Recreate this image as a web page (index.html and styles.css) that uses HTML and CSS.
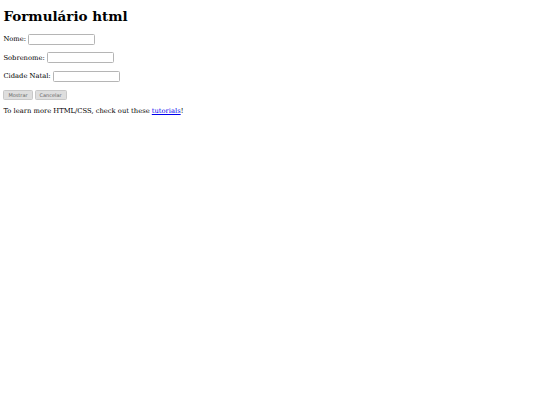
FILE: index.html
```html
<!DOCTYPE html>
<html lang="pt">
<head>
<meta charset="utf-8">
<title>Formulário html</title>
<link rel="stylesheet" href="styles.css">
</head>
<body>
<h1 class="title">Formulário html</h1>
<form class="form">
  <p class="row"><label class="lbl">Nome: <input class="field" type="text"></label></p>
  <p class="row"><label class="lbl">Sobrenome: <input class="field" type="text"></label></p>
  <p class="row"><label class="lbl">Cidade Natal: <input class="field" type="text"></label></p>
  <p class="row actions"><button class="btn" type="button">Mostrar</button><button class="btn" type="reset">Cancelar</button></p>
</form>
<p class="note">To learn more HTML/CSS, check out these <a class="link" href="#">tutorials</a>!</p>
</body>
</html>
```
FILE: styles.css
```css
html { background: #fff; }
body {
  margin: 0 3.4px;
  padding-top: 0.1px;
  font-family: "DejaVu Serif", serif;
  font-size: 6.75px;
  color: #000;
}
.title {
  font-size: 13.5px;
  font-weight: bold;
  margin: 9px 0;
  line-height: 15.7px;
}
.form { margin: 0; }
.row {
  margin: 9px 0 0;
  height: 11px;
  display: flex;
  align-items: center;
}
.row + .row { margin-top: 7.5px; }
.actions { gap: 2px; }
.lbl { display: flex; align-items: center; white-space: pre; }
.field {
  width: 67px;
  height: 11px;
  box-sizing: border-box;
  padding: 0 1px;
  margin: 0;
  border: 1px solid #b5b5b5;
  border-radius: 1.5px;
  font-size: 5.6px;
  background: #fff;
}
.btn {
  font-family: "DejaVu Sans", sans-serif;
  font-size: 5px;
  color: #666;
  background: #dedede;
  border: 1px solid #c8c8c8;
  border-radius: 1.5px;
  padding: 0 4px;
  height: 10px;
  line-height: 8px;
  margin: 0;
}
.note { margin: 7px 0 0; line-height: 8px; }
.link { color: #00e; text-decoration: underline; }
```
